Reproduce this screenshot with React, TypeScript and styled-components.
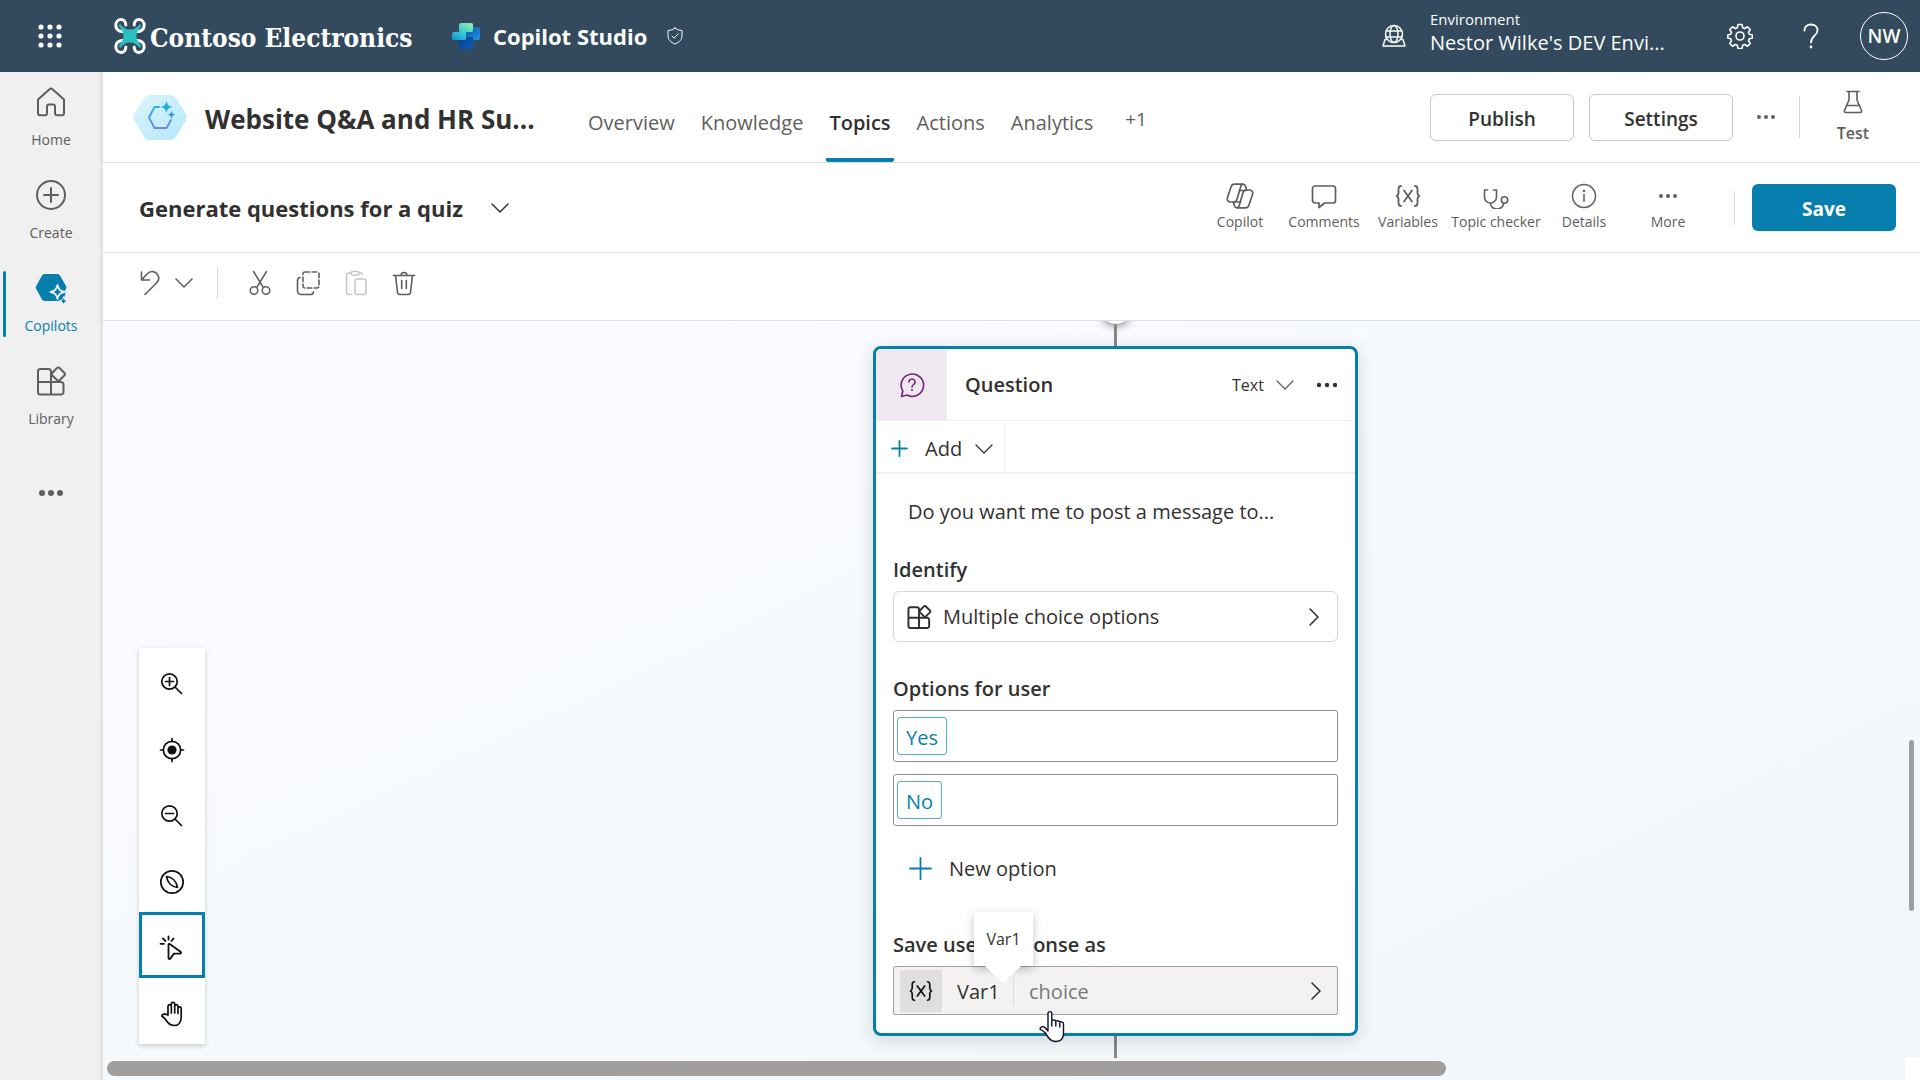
import React from "react";
import styled, { createGlobalStyle, css } from "styled-components";

const color = {
  header: "#33495e",
  rail: "#f0f0f0",
  accent: "#067fae",
  text: "#323130",
  muted: "#605e5c",
  line: "#dfdfdf",
  softLine: "#efefef",
  thumb: "#a19f9d",
};

const GlobalStyle = createGlobalStyle`
  *, *::before, *::after { box-sizing: border-box; }
  body { margin: 0; }
  body, button, input, select {
    font-family: "Open Sans", "Noto Sans", sans-serif;
    color: ${color.text};
  }
  button { background: none; border: 0; padding: 0; cursor: pointer; }
  svg { display: block; flex: none; fill: none; stroke: currentColor; stroke-linecap: round; stroke-linejoin: round; }
`;

/* ---------- Shell ---------- */

const Page = styled.div`
  display: grid;
  grid-template: 72px minmax(0, 1fr) / 103px minmax(0, 1fr);
  height: 100vh;
  overflow: hidden;
`;

const Header = styled.header`
  grid-column: 1 / -1;
  display: flex;
  align-items: center;
  padding: 0 12px 0 28px;
  background: ${color.header};
  color: #fbfff8;
`;

const HeaderButton = styled.button`
  display: grid;
  place-items: center;
  width: 44px;
  height: 48px;
  color: inherit;
`;

const Brand = styled.a`
  display: flex;
  align-items: center;
  gap: 4px;
  width: 338px;
  margin-left: 42px;
  color: #fff;
  text-decoration: none;
  font: 700 26px/36px "DejaVu Serif Condensed", "DejaVu Serif", serif;
  white-space: nowrap;
`;

const BrandName = styled.span`
  padding-top: 4px;
`;

const Product = styled.a`
  display: flex;
  align-items: center;
  gap: 13px;
  margin-right: 6px;
  color: inherit;
  text-decoration: none;
  font-size: 22px;
  font-weight: 700;
  line-height: 32px;
  white-space: nowrap;
`;

const HeaderRight = styled.div`
  display: flex;
  align-items: center;
  margin-left: auto;
`;

const Environment = styled.button`
  display: flex;
  align-items: center;
  gap: 24px;
  width: 336px;
  height: 72px;
  color: inherit;
  text-align: left;
  white-space: nowrap;
`;

const EnvironmentText = styled.span`
  display: flex;
  flex-direction: column;
  padding-bottom: 8px;
  font-size: 20px;
  line-height: 26px;
`;

const EnvironmentLabel = styled.span`
  font-size: 15px;
  line-height: 22px;
`;

const HeaderTools = styled.div`
  display: flex;
  gap: 27px;
  margin-right: 27px;
`;

const Avatar = styled.button`
  width: 48px;
  height: 48px;
  border: 1px solid #fff;
  border-radius: 50%;
  color: inherit;
  font-size: 19px;
  font-weight: 600;
`;

/* ---------- Left rail ---------- */

const Rail = styled.nav`
  display: flex;
  flex-direction: column;
  background: ${color.rail};
  border-right: 3px solid #e2e2e2;
`;

const RailItem = styled.a<{ $active?: boolean }>`
  position: relative;
  display: flex;
  flex-direction: column;
  align-items: center;
  justify-content: center;
  gap: 12px;
  height: 93px;
  padding: 0 0 2px 2px;
  color: ${(p) => (p.$active ? color.accent : color.muted)};
  font-size: 14px;
  line-height: 20px;
  text-decoration: none;

  ${(p) =>
    p.$active &&
    css`
      &::before {
        content: "";
        position: absolute;
        left: 3px;
        top: 13px;
        width: 3px;
        height: 66px;
        border-radius: 2px;
        background: ${color.accent};
      }
    `}
`;

const RailMore = styled(RailItem)`
  height: 100px;
`;

/* ---------- Main column ---------- */

const Main = styled.main`
  display: flex;
  flex-direction: column;
  min-width: 0;
  background: #fff;
`;

const Bar = styled.div<{ $height: number }>`
  display: flex;
  align-items: center;
  flex: none;
  height: ${(p) => p.$height}px;
  border-bottom: 1px solid ${color.line};
`;

const AgentBadge = styled.span`
  margin-left: 30px;
`;

const AgentTitle = styled.h1`
  width: 380px;
  margin: 0 0 0 18px;
  padding-top: 3px;
  font-size: 26px;
  font-weight: 700;
  line-height: 36px;
  white-space: nowrap;
`;

const Tabs = styled.nav`
  display: flex;
  gap: 20px;
  height: 90px;
`;

const Tab = styled.a<{ $active?: boolean }>`
  display: flex;
  align-items: center;
  padding: 14px 3px 0;
  border-bottom: 4px solid ${(p) => (p.$active ? color.accent : "transparent")};
  border-radius: 2px;
  color: ${(p) => (p.$active ? color.text : color.muted)};
  font-size: 20px;
  font-weight: ${(p) => (p.$active ? 600 : 400)};
  text-decoration: none;
`;

const MoreTabs = styled.button`
  margin-left: 6px;
  padding: 4px 3px 0;
  color: ${color.muted};
  font-size: 19px;
`;

const Actions = styled.div`
  display: flex;
  align-items: center;
  margin-left: auto;
`;

const Button = styled.button<{ $primary?: boolean }>`
  width: 144px;
  height: 47px;
  padding-top: 3px;
  border: ${(p) => (p.$primary ? "0" : "1px solid #c8c6c4")};
  border-radius: 6px;
  background: ${(p) => (p.$primary ? color.accent : "#fff")};
  color: ${(p) => (p.$primary ? "#fff" : color.text)};
  font-size: 19px;
  font-weight: ${(p) => (p.$primary ? 700 : 600)};
`;

const AgentActions = styled(Actions)`
  gap: 15px;
  padding-right: 29px;
`;

const IconButton = styled.button<{ $width: number; $faded?: boolean }>`
  display: grid;
  place-items: center;
  width: ${(p) => p.$width}px;
  height: 40px;
  color: ${(p) => (p.$faded ? "#c8c6c4" : color.muted)};
`;

const Divider = styled.span<{ $height: number }>`
  width: 1px;
  height: ${(p) => p.$height}px;
  background: #d6d6d6;
`;

const TestButton = styled.button`
  display: flex;
  flex-direction: column;
  align-items: center;
  gap: 8px;
  width: 76px;
  color: ${color.muted};
  font-size: 16px;
  font-weight: 600;
  line-height: 22px;
`;

const TopicPicker = styled.button`
  display: flex;
  align-items: center;
  gap: 28px;
  margin-left: 36px;
  font-size: 22px;
  font-weight: 700;
  line-height: 32px;
  white-space: nowrap;
`;

const Tools = styled.div`
  display: grid;
  grid-template-columns: 84px 84px 84px 92px 84px 84px;
  margin-right: 7px;
`;

const Tool = styled.button`
  display: flex;
  flex-direction: column;
  align-items: center;
  gap: 3px;
  color: ${color.muted};
  font-size: 14px;
  line-height: 20px;
  white-space: nowrap;
`;

const TopicActions = styled(Actions)`
  gap: 17px;
  padding-right: 24px;
`;

const EditTools = styled.div`
  display: flex;
  align-items: center;
  gap: 8px;
  margin-left: 31px;
  padding-bottom: 8px;

  ${Divider} {
    margin: 0 14px 0 15px;
  }
`;

/* ---------- Canvas ---------- */

const Canvas = styled.section`
  position: relative;
  flex: 1;
  min-height: 0;
  overflow: hidden;
  background: linear-gradient(155deg, #fafbfe 15%, #f5f9fc 55%, #f1f7fa 85%);
`;

const CanvasTools = styled.div`
  position: absolute;
  left: 36px;
  bottom: 36px;
  display: flex;
  flex-direction: column;
  width: 66px;
  background: #fff;
  box-shadow: 0 2px 5px rgba(0, 0, 0, 0.18);
`;

const CanvasTool = styled.button<{ $active?: boolean }>`
  display: grid;
  place-items: center;
  height: 66px;
  padding-top: 6px;
  border: 3px solid ${(p) => (p.$active ? color.accent : "transparent")};
  color: #111;
`;

const Flow = styled.div`
  position: absolute;
  left: 770px;
  top: -21px;
  display: flex;
  flex-direction: column;
  align-items: center;
  width: 485px;
`;

const AddNode = styled.button`
  width: 28px;
  height: 24px;
  border-radius: 50%;
  background: #fff;
  box-shadow: 0 2px 8px rgba(0, 0, 0, 0.45);
`;

const Connector = styled.span`
  width: 3px;
  height: 22px;
  background: #8a8886;
`;

const Card = styled.article`
  position: relative;
  width: 100%;
  border: 3px solid ${color.accent};
  border-radius: 8px;
  background: #fff;
  box-shadow: 0 4px 18px rgba(0, 0, 0, 0.14);
`;

const CardHead = styled.header`
  display: flex;
  align-items: center;
  height: 72px;
  padding-right: 17px;
  border-bottom: 1px solid ${color.softLine};
`;

const CardIcon = styled.span`
  display: grid;
  place-items: center;
  width: 71px;
  height: 71px;
  border-radius: 5px 0 0 0;
  background: #efe8f0;
  color: #742774;
`;

const CardTitle = styled.h2`
  margin: 0 auto 0 18px;
  font-size: 20px;
  font-weight: 600;
`;

const TypeSelect = styled.label`
  display: flex;
  align-items: center;
  gap: 12px;
  margin-right: 22px;
  color: ${color.muted};

  select {
    appearance: none;
    width: 32px;
    padding: 0;
    border: 0;
    background: none;
    color: ${color.text};
    font-size: 16px;
  }
`;

const AddRow = styled.div`
  display: flex;
  height: 53px;
  padding-top: 4px;
  border-bottom: 2px solid ${color.softLine};
`;

const AddButton = styled.button`
  display: flex;
  align-items: center;
  width: 129px;
  padding-left: 15px;
  border-right: 1px solid ${color.softLine};
  font-size: 20px;
  color: ${color.text};

  span { margin: 0 13px 0 17px; }
`;

const CardBody = styled.div`
  display: flex;
  flex-direction: column;
  padding: 19px 17px 18px;
`;

const MessageInput = styled.input`
  height: 36px;
  margin-bottom: 27px;
  padding: 0 15px;
  border: 0;
  background: none;
  font-size: 20px;
`;

const FieldLabel = styled.h3<{ $spaced?: boolean }>`
  margin: ${(p) => (p.$spaced ? 33 : 0)}px 0 7px;
  font-size: 20px;
  font-weight: 600;
  line-height: 28px;
`;

const PickerButton = styled.button<{ $filled?: boolean }>`
  display: flex;
  align-items: center;
  height: ${(p) => (p.$filled ? 49 : 51)}px;
  padding: 0 ${(p) => (p.$filled ? "15px 0 6px" : "17px 0 12px")};
  border: 1px solid ${(p) => (p.$filled ? "#a6a4a2" : "#d6d6d6")};
  border-radius: ${(p) => (p.$filled ? 2 : 6)}px;
  background: ${(p) => (p.$filled ? "#f3f2f1" : "#fff")};
  font-size: 20px;

  > svg:last-child { margin-left: auto; }
`;

const PickerText = styled.span`
  margin-left: 11px;
`;

const Options = styled.div`
  display: flex;
  flex-direction: column;
  gap: 12px;
  margin-bottom: 22px;
`;

const OptionBox = styled.div`
  display: flex;
  height: 52px;
  padding: 6px 3px;
  border: 1px solid #8f8d8b;
  border-radius: 3px;
`;

const Chip = styled.button`
  height: 38px;
  padding: 2px 8px 0;
  border: 1px solid #56acca;
  border-radius: 3px;
  color: ${color.accent};
  font-size: 20px;
`;

const NewOption = styled.button`
  display: flex;
  align-items: center;
  align-self: flex-start;
  gap: 17px;
  height: 40px;
  margin: 0 0 43px 16px;
  font-size: 20px;
  color: ${color.text};
`;

const VarBadge = styled.span`
  display: grid;
  place-items: center;
  width: 42px;
  height: 42px;
  background: #e1dfdd;
  color: #111;
`;

const VarName = styled.span`
  width: 72px;
  height: 32px;
  padding-left: 15px;
  border-right: 1px solid #e1dfdd;
  line-height: 34px;
  text-align: left;
`;

const VarType = styled.span`
  margin-left: 15px;
  padding-top: 2px;
  color: #7a7876;
`;

const Tooltip = styled.div`
  position: absolute;
  left: 98px;
  bottom: 67px;
  width: 59px;
  height: 54px;
  background: #fff;
  box-shadow: 0 3px 9px rgba(0, 0, 0, 0.24);
  font-size: 16px;
  line-height: 54px;
  text-align: center;

  &::after {
    content: "";
    position: absolute;
    left: 11px;
    top: 54px;
    border: solid transparent;
    border-width: 17px 18px 0;
    border-top-color: #fff;
  }
`;

const Cursor = styled.span`
  position: absolute;
  left: 163px;
  bottom: -10px;
`;

const Scrollbar = styled.div<{ $axis: "x" | "y" }>`
  position: absolute;
  border-radius: 8px;
  background: ${color.thumb};
  ${(p) =>
    p.$axis === "x"
      ? css`left: 4px; bottom: 4px; width: calc(74% - 6px); height: 15px;`
      : css`right: 6px; bottom: 169px; width: 5px; height: 171px;`}
`;

const ScrollCorner = styled.div`
  position: absolute;
  right: 0;
  bottom: 0;
  width: 15px;
  height: 23px;
  background: #fff;
`;

/* ---------- Icons ---------- */

type IconProps = { w: number; h?: number; sw?: number; children: React.ReactNode };
const Icon = ({ w, h = w, sw = 2, children }: IconProps) => (
  <svg width={w} height={h} viewBox={`0 0 ${w} ${h}`} strokeWidth={sw} aria-hidden="true">
    {children}
  </svg>
);

const Waffle = () => (
  <Icon w={24}>
    {[3, 12, 21].map((y) =>
      [3, 12, 21].map((x) => <circle key={`${x}-${y}`} cx={x} cy={y} r="2.6" fill="currentColor" stroke="none" />)
    )}
  </Icon>
);

const DroneLogo = () => (
  <Icon w={32} h={36} sw={3}>
    <path d="M9.500 13.500C5 14 1.800 11 1.800 7.500S4.200 1.600 7 1.600s4.800 2.200 4.800 5.400M22.500 13.500c4.500.5 7.700-2.500 7.700-6S27.800 1.600 25 1.600s-4.800 2.200-4.800 5.400M9.500 22.500c-4.500-.5-7.700 2.500-7.700 6s2.400 5.900 5.200 5.900 4.800-2.200 4.800-5.400M22.500 22.500c4.500-.5 7.700 2.500 7.700 6s-2.400 5.900-5.200 5.900-4.800-2.200-4.800-5.400" stroke="#fff" />
    <path d="M6 6.500c4 4 6 5.500 10 5.500s6-1.500 10-5.500c1 1 .8 1.800 0 2.800-3 3.700-4 5.700-4 8.700s1 5 4 8.700c.8 1 1 1.800 0 2.800-4-4-6-5.500-10-5.500S10 25.500 6 29.500c-1-1-.8-1.800 0-2.800 3-3.700 4-5.700 4-8.700s-1-5-4-8.700c-.8-1-1-1.800 0-2.800z" fill="#2bbfc0" stroke="#2bbfc0" strokeWidth="1" />
  </Icon>
);

const StudioLogo = () => (
  <Icon w={28} h={26}>
    <defs>
      <linearGradient id="st-top" x1="0" y1="1" x2="1" y2="0">
        <stop stopColor="#2fc5cf" /><stop offset="1" stopColor="#9ef0a8" />
      </linearGradient>
      <linearGradient id="st-left" x1="0" y1="1" x2="1" y2="0">
        <stop stopColor="#0f8fd0" /><stop offset="1" stopColor="#3fd8dc" />
      </linearGradient>
      <linearGradient id="st-right" x1="0" y1="0" x2="1" y2="1">
        <stop stopColor="#0c5aa8" /><stop offset="1" stopColor="#2193e4" />
      </linearGradient>
      <linearGradient id="st-bottom" x1="0" y1="0" x2="1" y2="1">
        <stop stopColor="#0a3f8c" /><stop offset="1" stopColor="#0b5fb9" />
      </linearGradient>
    </defs>
    <g stroke="none">
      <path d="M19 4h7.500A1.500 1.500 0 0 1 28 5.500V15a2 2 0 0 1-2 2H14V6z" fill="url(#st-right)" />
      <path d="M7 14h14v10.500a1.500 1.500 0 0 1-1.500 1.500h-11A1.500 1.500 0 0 1 7 24.500z" fill="url(#st-bottom)" />
      <path d="M2 9h12v6.500a1.500 1.500 0 0 1-1.500 1.500h-11A1.500 1.500 0 0 1 0 15.500V11a2 2 0 0 1 2-2z" fill="url(#st-left)" />
      <path d="M9 0h10.500A1.500 1.500 0 0 1 21 1.500V7a2 2 0 0 1-2 2H8.500A1.500 1.500 0 0 1 7 7.500V2a2 2 0 0 1 2-2z" fill="url(#st-top)" />
    </g>
  </Icon>
);

const Shield = () => (
  <Icon w={16} h={18} sw={1}>
    <path d="M8 1c2 1.600 4.500 2.400 7 2.500v5c0 4-2.500 6.800-7 8.500-4.500-1.700-7-4.500-7-8.500v-5C3.500 3.400 6 2.600 8 1z" />
    <path d="M5 9l2.200 2.200 4-4.400" />
  </Icon>
);

const EnvIcon = () => (
  <Icon w={24} h={24} sw={1.5}>
    <circle cx="12" cy="10" r="8.500" />
    <ellipse cx="12" cy="10" rx="4" ry="8.500" />
    <path d="M4 7h16M4 13h16M4 15.500H3L1 22h22l-2-6.500h-1" />
  </Icon>
);

const Gear = () => (
  <Icon w={26} sw={1.6}>
    <path d="M11 1.500h4l.7 3.200 2 .8 2.800-1.700 2.700 2.700-1.700 2.800.8 2 3.200.7v3l-3.200.7-.8 2 1.700 2.800-2.700 2.700-2.800-1.700-2 .8-.7 3.200h-4l-.7-3.200-2-.8-2.800 1.700-2.700-2.700 1.700-2.800-.8-2L.8 15v-3l2.900-.7.8-2-1.700-2.800 2.700-2.700 2.800 1.700 2-.8z" />
    <circle cx="13" cy="13" r="4" />
  </Icon>
);

const Help = () => (
  <Icon w={16} h={26} sw={1.8}>
    <path d="M1.500 7.500C1.500 4 4 1.500 8 1.500S14.500 4 14.500 7.500c0 5-6.500 5.500-6.500 12" />
    <circle cx="8" cy="24" r="1.400" fill="currentColor" stroke="none" />
  </Icon>
);

const Home = () => (
  <Icon w={32}>
    <path d="M3 13.500 14.500 3.300a2.200 2.200 0 0 1 3 0L29 13.500v14a1.800 1.800 0 0 1-1.800 1.800h-5.400a1.800 1.800 0 0 1-1.800-1.800v-7a2 2 0 0 0-2-2h-4a2 2 0 0 0-2 2v7a1.800 1.800 0 0 1-1.800 1.800H4.800A1.800 1.800 0 0 1 3 27.500z" />
  </Icon>
);

const CreateIcon = () => (
  <Icon w={32}>
    <circle cx="16" cy="16" r="14" />
    <path d="M16 9v14M9 16h14" />
  </Icon>
);

const CopilotsIcon = () => (
  <Icon w={32}>
    <path d="M9.500 2h13a3 3 0 0 1 2.500 1.500l6 10.500a3 3 0 0 1 0 3l-1 1.500A8 8 0 0 1 22 29H9.500A3 3 0 0 1 7 27.500L1.200 17a3 3 0 0 1 0-3L7 3.500A3 3 0 0 1 9.500 2z" fill="currentColor" stroke="none" />
    <path d="M22.500 13c1 4.500 2.500 6 7 7-4.500 1-6 2.500-7 7-1-4.500-2.500-6-7-7 4.500-1 6-2.500 7-7z" fill={color.accent} stroke={color.rail} strokeWidth="1.800" />
    <path d="M28.500 25c.6 2.500 1.400 3.400 4 4-2.600.6-3.400 1.500-4 4-.6-2.500-1.400-3.400-4-4 2.600-.6 3.400-1.500 4-4z" fill="currentColor" stroke={color.rail} strokeWidth="1" />
  </Icon>
);

const Library = ({ size = 32 }: { size?: number }) => (
  <svg width={size} height={size} viewBox="0 0 32 32" strokeWidth={size < 30 ? 2.4 : 2} aria-hidden="true">
    <path d="M16 17H3M16 6v23.500M16 17V6.500A2.500 2.500 0 0 0 13.500 4h-8A2.500 2.500 0 0 0 3 6.500V27a2.500 2.500 0 0 0 2.500 2.500H26a2.500 2.500 0 0 0 2.500-2.500v-7.500A2.500 2.500 0 0 0 26 17H16" />
    <path d="m22 3 -4.800 5a1.600 1.600 0 0 0 0 2.300l5 5a1.600 1.600 0 0 0 2.300 0l5-5a1.600 1.600 0 0 0 0-2.300l-5-5a1.600 1.600 0 0 0-2.500 0z" />
  </svg>
);

const Dots = ({ w = 20, r = 2, gap = 7 }: { w?: number; r?: number; gap?: number }) => (
  <Icon w={w} h={8}>
    {[-gap, 0, gap].map((d) => (
      <circle key={d} cx={w / 2 + d} cy="4" r={r} fill="currentColor" stroke="none" />
    ))}
  </Icon>
);

const HexAgent = () => (
  <Icon w={54} h={46}>
    <defs>
      <linearGradient id="hex-bg" x1="0" y1="0" x2="1" y2="1">
        <stop stopColor="#dcf5fc" /><stop offset="1" stopColor="#b4e8fa" />
      </linearGradient>
      <linearGradient id="hex-line" x1="0" y1="0" x2="0" y2="1">
        <stop stopColor="#25aee0" /><stop offset="1" stopColor="#7283ee" />
      </linearGradient>
    </defs>
    <path d="M16 1h22q3 0 4.500 2.500L53 20q1.400 3 0 6L42.500 43.500Q41 46 38 46H16q-3 0-4.500-2.500L1 26q-1.400-3 0-6L11.500 3.500Q13 1 16 1z" fill="url(#hex-bg)" stroke="none" />
    <path d="M26 13h-4.500l-5.500 10.500 5.500 10.500h12L38 26" stroke="url(#hex-line)" strokeWidth="1.800" />
    <path d="M33.500 7c1 4 2 5 6 6-4 1-5 2-6 6-1-4-2-5-6-6 4-1 5-2 6-6z" fill="#22ace0" stroke="none" />
    <path d="M38.500 16.500c.7 2.800 1.400 3.500 4.200 4.200-2.800.7-3.500 1.400-4.200 4.200-.7-2.800-1.400-3.500-4.200-4.200 2.800-.7 3.500-1.400 4.200-4.200z" fill="#4198ea" stroke="none" />
  </Icon>
);

const ChevronDown = ({ sw = 1.5 }: { sw?: number }) => (
  <Icon w={18} h={12} sw={sw}><path d="M1 2l8 8 8-8" /></Icon>
);

const ChevronRight = () => (
  <Icon w={12} h={20} sw={1.6}><path d="M2 2l8 8-8 8" /></Icon>
);

const Flask = () => (
  <Icon w={20} h={24} sw={1.6}>
    <path d="M4 1.500h12M6 1.500V10L1.500 20.500a1.500 1.500 0 0 0 1.500 2h14a1.500 1.500 0 0 0 1.500-2L14 10V1.500M3.500 15.500h13" />
  </Icon>
);

const CopilotIcon = () => (
  <Icon w={28} h={26} sw={1.7}>
    <path d="M17 1.200H8.500C6.500 1.200 5.500 2.400 5 4L1.500 14.500c-.8 2.700.5 4.500 3 4.500h3.200c1.800 0 2.700-.9 3.200-2.500l3.800-12.800c.4-1.500 1-2.500 2.300-2.500 1.500 0 2.200.8 2.700 2.300l1 3.500" />
    <path d="M11 24.800h8.500c2 0 3-1.200 3.500-2.800l3.500-10.500c.8-2.700-.5-4.500-3-4.500h-3.200c-1.800 0-2.700.9-3.200 2.500l-3.800 12.800c-.4 1.500-1 2.500-2.300 2.500-1.500 0-2.200-.8-2.700-2.300L7.300 19" />
    <path d="M13.500 7.500h6M9 19h5.500" />
  </Icon>
);

const Comment = () => (
  <Icon w={26} sw={1.7}>
    <path d="M4 3h18a2.500 2.500 0 0 1 2.500 2.500v12A2.500 2.500 0 0 1 22 20h-8.500L8 24.500V20H4a2.500 2.500 0 0 1-2.500-2.500v-12A2.500 2.500 0 0 1 4 3z" />
  </Icon>
);

const Variable = ({ size = 26 }: { size?: number }) => (
  <svg width={size} height={size} viewBox="0 0 26 26" strokeWidth="1.800" aria-hidden="true">
    <path d="M6 3C3.800 3 3.500 4 3.500 6v3.500c0 2-.5 3-2 3.500 1.500.5 2 1.500 2 3.500V20c0 2 .3 3 2.500 3M20 3c2.200 0 2.500 1 2.500 3v3.500c0 2 .5 3 2 3.500-1.500.5-2 1.500-2 3.500V20c0 2-.3 3-2.500 3M9 7.500l8 11M17 7.500l-8 11" />
  </svg>
);

const Stethoscope = () => (
  <Icon w={26} sw={1.6}>
    <path d="M4.500 7H1.500v7a6 6 0 0 0 12 0V7h-3M7.500 20v.5a6.500 5.500 0 0 0 13 0V20.500" />
    <circle cx="21.500" cy="17" r="3.200" />
  </Icon>
);

const Info = () => (
  <Icon w={26} sw={1.5}>
    <circle cx="13" cy="13" r="11.500" />
    <path d="M13 11.500v7" />
    <circle cx="13" cy="8" r="1.200" fill="currentColor" stroke="none" />
  </Icon>
);

const Undo = () => (
  <Icon w={20} h={26} sw={1.6}>
    <path d="M1.500 2v8h8M1.500 10l5.500-6C11 0 15.500 1.500 17.500 4.500s1.500 6-1 8.500L5 24.500" />
  </Icon>
);

const Cut = () => (
  <Icon w={22} h={26} sw={1.5}>
    <path d="M4.500 1.500 14 17M17.500 1.500 8 17" />
    <circle cx="5" cy="20.500" r="3.800" />
    <circle cx="17" cy="20.500" r="3.800" />
  </Icon>
);

const Copy = () => (
  <Icon w={24} h={26} sw={1.6}>
    <rect x="7" y="2" width="16" height="16" rx="2" strokeDasharray="4.500 2.500" />
    <path d="M4 7.500a3 3 0 0 0-2.500 3V21A3.500 3.500 0 0 0 5 24.500h9.500a3 3 0 0 0 3-2.500" />
  </Icon>
);

const Paste = () => (
  <Icon w={22} h={26} sw={1.5}>
    <path d="M6 3H3.500a2 2 0 0 0-2 2v17.500a2 2 0 0 0 2 2H7M14 3h2a2 2 0 0 1 1.500 1.500" />
    <rect x="6" y="1.500" width="8" height="3.500" rx="1.700" />
    <rect x="10" y="9" width="11" height="15.500" rx="2" />
  </Icon>
);

const Trash = () => (
  <Icon w={24} h={26} sw={1.6}>
    <path d="M1.500 5.500h21M9 5.500a3 3 0 0 1 6 0M3.500 5.500l2 16.500a2.500 2.500 0 0 0 2.500 2.500h8a2.500 2.500 0 0 0 2.500-2.500l2-16.500M9.700 10.500v8M14.300 10.500v8" />
  </Icon>
);

const Magnifier = ({ plus }: { plus?: boolean }) => (
  <Icon w={24} sw={1.7}>
    <circle cx="9.500" cy="9.500" r="7.700" />
    <path d="M15 15l6.500 6.500M5.500 9.500h8" />
    {plus && <path d="M9.500 5.500v8" />}
  </Icon>
);

const Target = () => (
  <Icon w={26} sw={1.7}>
    <circle cx="13" cy="13" r="8.700" />
    <circle cx="13" cy="13" r="4.600" fill="currentColor" stroke="none" />
    <path d="M13 1.500v3M13 21.500v3M1.500 13h3M21.500 13h3" />
  </Icon>
);

const Compass = () => (
  <Icon w={26} sw={1.7}>
    <circle cx="13" cy="13" r="11.200" />
    <path d="M7.500 7.500c5.500.5 10 4.500 11 11-5.500-.5-10-4.500-11-11z" />
  </Icon>
);

const Pointer = () => (
  <Icon w={26} sw={1.8}>
    <path d="M9.500 9.500v13.500a1 1 0 0 0 1.800.6l3.700-5h6.200a1 1 0 0 0 .6-1.700L10.800 9a.8.8 0 0 0-1.300.5zM9.500 1.500v3M14.500 3.500l-2 2.500M4 3.500 6.500 6M1.500 8.800H5" />
  </Icon>
);

const Hand = () => (
  <Icon w={24} h={26} sw={1.7}>
    <path d="M8 14V5a1.700 1.700 0 0 1 3.300 0V3a1.700 1.700 0 0 1 3.400 0v2a1.700 1.700 0 0 1 3.300 0v2.500a1.600 1.600 0 0 1 3.200 0V16c0 5-2.500 8.500-7 8.500-3.500 0-5.500-1.500-7.500-4.500-1.500-2.200-3-3.700-5-5 .8-2 3-2.500 6.300-1zM11.300 5v7M14.700 4.500V12M18 7v5.500" />
  </Icon>
);

const QuestionBubble = () => (
  <Icon w={26} sw={1.6}>
    <path d="M2.500 24.500 3.800 19A11.200 11.200 0 1 1 8 23z" />
    <path d="M10 10a3 3 0 1 1 4.500 2.600c-1 .7-1.500 1.200-1.500 2.400" />
    <circle cx="13" cy="18" r="1.100" fill="currentColor" stroke="none" />
  </Icon>
);

const Plus = ({ size }: { size: number }) => (
  <svg width={size} height={size} viewBox={`0 0 ${size} ${size}`} strokeWidth="1.800" color={color.accent} aria-hidden="true">
    <path d={`M${size / 2} 1v${size - 2}M1 ${size / 2}h${size - 2}`} />
  </svg>
);

const PointingHand = () => (
  <svg width="26" height="33" viewBox="0 0 26 33" strokeWidth="1.400" aria-hidden="true">
    <path d="M9 21V3.500a1.900 1.900 0 0 1 3.800 0V11c0-1.500 4-1.500 4 .5 0-1.300 4-1 4 1 0-1.200 3.700-1 3.700 1.200V23c0 5-2.500 8.500-7.500 8.500-4 0-6-1.500-8-4.500L6 22.500c-1.500-1.500-3.500-2-5-3.500 0-2 3-3 5-1.500zM12.800 11v5M16.800 11.500V16M20.800 12.500V17" fill="#fff" stroke="#0b1030" />
  </svg>
);

/* ---------- Content ---------- */

const railItems = [
  { label: "Home", icon: <Home /> },
  { label: "Create", icon: <CreateIcon /> },
  { label: "Copilots", icon: <CopilotsIcon />, active: true },
  { label: "Library", icon: <Library /> },
];

const tabs = ["Overview", "Knowledge", "Topics", "Actions", "Analytics"];

const MoreIcon = () => (
  <Icon w={26}>
    {[6, 13, 20].map((x) => (
      <circle key={x} cx={x} cy="13" r="2" fill="currentColor" stroke="none" />
    ))}
  </Icon>
);

const topicTools = [
  { label: "Copilot", icon: <CopilotIcon /> },
  { label: "Comments", icon: <Comment /> },
  { label: "Variables", icon: <Variable /> },
  { label: "Topic checker", icon: <Stethoscope /> },
  { label: "Details", icon: <Info /> },
  { label: "More", icon: <MoreIcon /> },
];

const canvasTools = [
  { label: "Zoom in", icon: <Magnifier plus /> },
  { label: "Reset view", icon: <Target /> },
  { label: "Zoom out", icon: <Magnifier /> },
  { label: "Minimap", icon: <Compass /> },
  { label: "Select", icon: <Pointer />, active: true },
  { label: "Pan", icon: <Hand /> },
];

function QuestionCard() {
  return (
    <Card>
      <CardHead>
        <CardIcon><QuestionBubble /></CardIcon>
        <CardTitle>Question</CardTitle>
        <TypeSelect>
          <select aria-label="Message type" defaultValue="Text">
            <option>Text</option>
          </select>
          <ChevronDown sw={1.2} />
        </TypeSelect>
        <button aria-label="Node options"><Dots w={22} r={2.2} gap={8} /></button>
      </CardHead>
      <AddRow>
        <AddButton>
          <Plus size={17} />
          <span>Add</span>
          <ChevronDown sw={1.2} />
        </AddButton>
      </AddRow>
      <CardBody>
        <MessageInput aria-label="Message" defaultValue="Do you want me to post a message to..." />
        <FieldLabel>Identify</FieldLabel>
        <PickerButton>
          <Library size={26} />
          <PickerText>Multiple choice options</PickerText>
          <ChevronRight />
        </PickerButton>
        <FieldLabel $spaced>Options for user</FieldLabel>
        <Options>
          <OptionBox><Chip>Yes</Chip></OptionBox>
          <OptionBox><Chip>No</Chip></OptionBox>
        </Options>
        <NewOption><Plus size={23} />New option</NewOption>
        <FieldLabel>Save user response as</FieldLabel>
        <PickerButton $filled>
          <VarBadge><Variable size={24} /></VarBadge>
          <VarName>Var1</VarName>
          <VarType>choice</VarType>
          <ChevronRight />
        </PickerButton>
      </CardBody>
      <Tooltip role="tooltip">Var1</Tooltip>
      <Cursor><PointingHand /></Cursor>
    </Card>
  );
}

export default function App() {
  return (
    <Page>
      <GlobalStyle />
      <Header>
        <HeaderButton aria-label="App launcher"><Waffle /></HeaderButton>
        <Brand href="#"><DroneLogo /><BrandName>Contoso Electronics</BrandName></Brand>
        <Product href="#"><StudioLogo />Copilot Studio</Product>
        <HeaderButton aria-label="Protection status"><Shield /></HeaderButton>
        <HeaderRight>
          <Environment>
            <EnvIcon />
            <EnvironmentText>
              <EnvironmentLabel>Environment</EnvironmentLabel>
              Nestor Wilke's DEV Envi...
            </EnvironmentText>
          </Environment>
          <HeaderTools>
            <HeaderButton aria-label="Settings"><Gear /></HeaderButton>
            <HeaderButton aria-label="Help"><Help /></HeaderButton>
          </HeaderTools>
          <Avatar>NW</Avatar>
        </HeaderRight>
      </Header>

      <Rail>
        {railItems.map((item) => (
          <RailItem key={item.label} href="#" $active={item.active}>
            {item.icon}
            {item.label}
          </RailItem>
        ))}
        <RailMore href="#" aria-label="More"><Dots w={28} r={3} gap={9} /></RailMore>
      </Rail>

      <Main>
        <Bar $height={91}>
          <AgentBadge><HexAgent /></AgentBadge>
          <AgentTitle>Website Q&amp;A and HR Su...</AgentTitle>
          <Tabs>
            {tabs.map((t) => (
              <Tab key={t} href="#" $active={t === "Topics"}>{t}</Tab>
            ))}
            <MoreTabs>+1</MoreTabs>
          </Tabs>
          <AgentActions>
            <Button>Publish</Button>
            <Button>Settings</Button>
            <IconButton $width={36} aria-label="More actions"><Dots /></IconButton>
            <Divider $height={42} />
            <TestButton><Flask />Test</TestButton>
          </AgentActions>
        </Bar>

        <Bar $height={90}>
          <TopicPicker>Generate questions for a quiz<ChevronDown /></TopicPicker>
          <TopicActions>
            <Tools>
              {topicTools.map((t) => (
                <Tool key={t.label}>{t.icon}{t.label}</Tool>
              ))}
            </Tools>
            <Divider $height={34} />
            <Button $primary>Save</Button>
          </TopicActions>
        </Bar>

        <Bar $height={68}>
          <EditTools>
            <IconButton $width={32} aria-label="Undo"><Undo /></IconButton>
            <IconButton $width={20} aria-label="Undo history"><ChevronDown /></IconButton>
            <Divider $height={32} />
            <IconButton $width={40} aria-label="Cut"><Cut /></IconButton>
            <IconButton $width={40} aria-label="Copy"><Copy /></IconButton>
            <IconButton $width={40} $faded aria-label="Paste"><Paste /></IconButton>
            <IconButton $width={40} aria-label="Delete"><Trash /></IconButton>
          </EditTools>
        </Bar>

        <Canvas>
          <Flow>
            <AddNode aria-label="Add node" />
            <Connector />
            <QuestionCard />
            <Connector />
          </Flow>
          <CanvasTools>
            {canvasTools.map((t) => (
              <CanvasTool key={t.label} $active={t.active} aria-label={t.label}>{t.icon}</CanvasTool>
            ))}
          </CanvasTools>
          <Scrollbar $axis="y" />
          <Scrollbar $axis="x" />
          <ScrollCorner />
        </Canvas>
      </Main>
    </Page>
  );
}
